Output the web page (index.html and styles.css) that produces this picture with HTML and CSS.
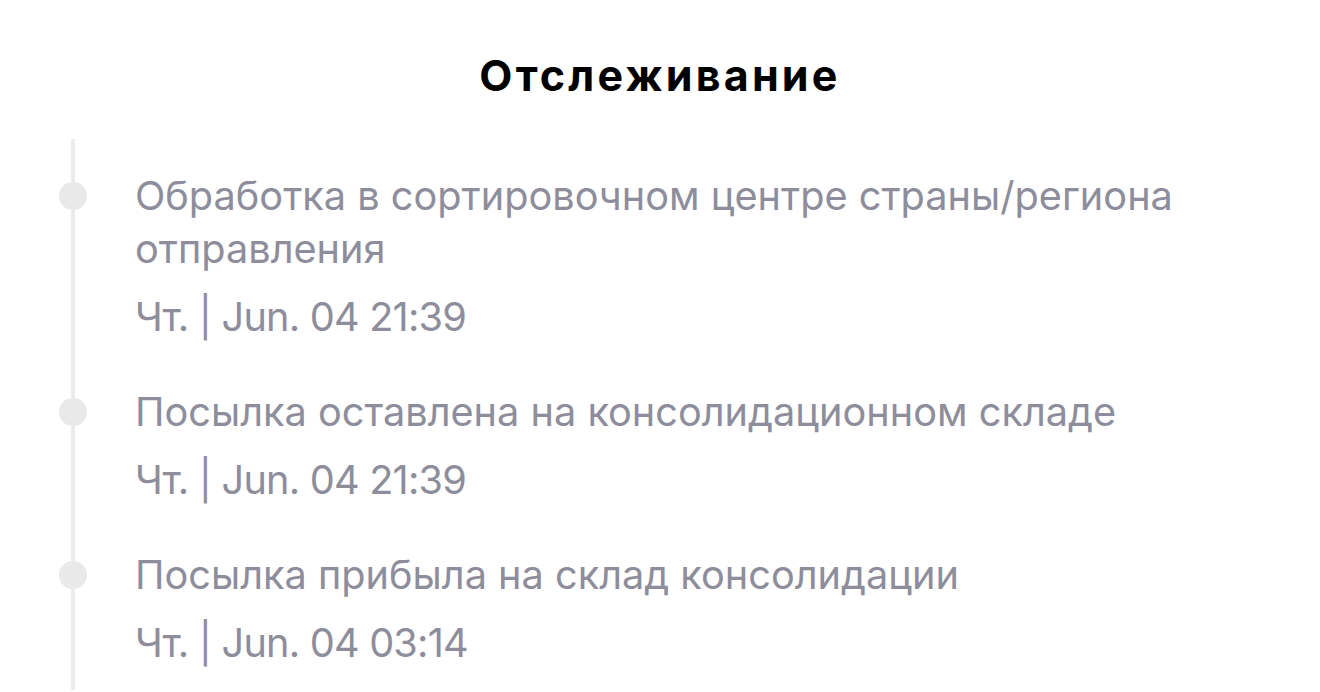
FILE: index.html
```html
<!DOCTYPE html>
<html lang="ru">
<head>
    <meta charset="UTF-8">
    <meta name="viewport" content="width=device-width, initial-scale=1.0">
    <title>Отслеживание</title>
    <link rel="stylesheet" href="styles.css">
</head>
<body>
    <h1 class="page-title">Отслеживание</h1>

    <!-- список событий доставки -->
    <ul class="track">
        <li class="track-item">
            <p class="track-text">Обработка в сортировочном центре страны/региона отправления</p>
            <p class="track-date">Чт. | Jun. 04 21:39</p>
        </li>
        <li class="track-item">
            <p class="track-text">Посылка оставлена на консолидационном складе</p>
            <p class="track-date">Чт. | Jun. 04 21:39</p>
        </li>
        <li class="track-item">
            <p class="track-text">Посылка прибыла на склад консолидации</p>
            <p class="track-date">Чт. | Jun. 04 03:14</p>
        </li>
    </ul>
</body>
</html>
```

FILE: styles.css
```css
body {
    margin: 0;
    background-color: #fff;
    font-family: Inter, "Noto Sans", sans-serif;
}

.page-title {
    margin: 0;
    padding-top: 50px;
    font-size: 43px;
    line-height: 50px;
    font-weight: 700;
    letter-spacing: 3.2px;
    text-align: center;
    color: #000;
}

.track {
    list-style: none;
    margin: 39px 0 0 71px;
    padding: 31px 0 20px 60px;
    border-left: 4px solid #ececec;
    width: 1100px;
}

.track-item {
    position: relative;
    margin-bottom: 42px;
}

.track-item:last-child {
    margin-bottom: 0;
}

/* точка на линии */
.track-item::before {
    content: "";
    position: absolute;
    left: -76px;
    top: 12px;
    width: 28px;
    height: 28px;
    border-radius: 50%;
    background-color: #e9e9ea;
}

.track-text,
.track-date {
    margin: 0;
    font-size: 39.7px;
    line-height: 53px;
    color: #8e8d9b;
}

.track-date {
    margin-top: 15px;
    letter-spacing: -0.8px;
}
```
